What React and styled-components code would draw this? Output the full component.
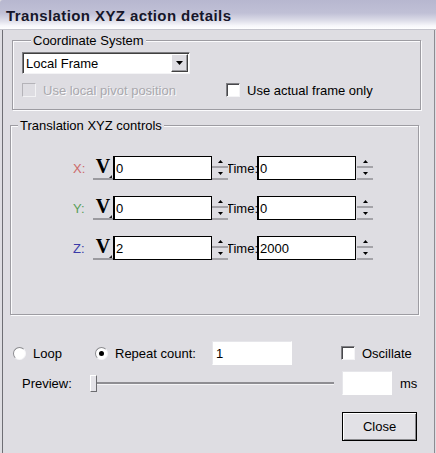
import styled, { createGlobalStyle } from "styled-components";

const GlobalStyle = createGlobalStyle`
  body {
    margin: 0;
    background: #dedde2;
    font-family: "Liberation Sans", Arial, sans-serif;
    font-size: 13px;
    color: #000;
  }
`;

const Window = styled.div`
  width: 436px;
  height: 453px;
  display: flex;
  flex-direction: column;
  background: #dedde2;
  overflow: hidden;
`;

const TitleBar = styled.div`
  height: 30px;
  flex-shrink: 0;
  display: flex;
  align-items: center;
  padding: 2px 0 0 6px;
  box-sizing: border-box;
  background: linear-gradient(
    to bottom,
    #b7b7cf 0%,
    #c0c0d6 45%,
    #dcdce8 70%,
    #f6f6fa 88%,
    #ffffff 100%
  );
  border-bottom: 1px solid #c4c4cc;
  border-top-left-radius: 3px;
  font-weight: bold;
  font-size: 15px;
  letter-spacing: 0.4px;
  color: #16162a;
`;

const Body = styled.div`
  flex: 1;
  margin: 0 1px 0 2px;
  padding-top: 3px;
  border-left: 1px solid #6e6e74;
  border-right: 1px solid #8c8c92;
`;

const Group = styled.fieldset`
  margin: ${(p) => p.$mt}px 0 0 ${(p) => p.$ml}px;
  width: ${(p) => p.$w}px;
  box-sizing: border-box;
  min-width: 0;
  padding: ${(p) => p.$pt}px 0 ${(p) => p.$pb}px ${(p) => p.$pl}px;
  border: 1px solid #9d9ca2;
  box-shadow: inset 1px 1px 0 #fbfbfd, 1px 1px 0 #fbfbfd;
`;

const Legend = styled.legend`
  margin-left: ${(p) => p.$offset}px;
  padding: 0 2px;
  line-height: 15px;
  background: #dedde2;
`;

const Select = styled.div`
  width: 168px;
  height: 22px;
  box-sizing: border-box;
  display: flex;
  align-items: center;
  background: #fff;
  border: 1px solid;
  border-color: #7c7c80 #f4f4f6 #f4f4f6 #7c7c80;
  box-shadow: inset 1px 1px 0 #404040;
  padding: 1px 1px 1px 3px;
`;

const SelectText = styled.span`
  flex: 1;
`;

const DropButton = styled.div`
  width: 17px;
  height: 18px;
  box-sizing: border-box;
  display: flex;
  align-items: center;
  justify-content: center;
  background: #dedde2;
  border: 1px solid;
  border-color: #fff #404040 #404040 #fff;
  box-shadow: inset -1px -1px 0 #9a9a9e;
`;

const CheckRow = styled.div`
  display: flex;
  align-items: center;
  height: 14px;
  margin-top: 9px;
`;

const CheckOption = styled.label`
  display: flex;
  align-items: center;
  width: ${(p) => (p.$w ? `${p.$w}px` : "auto")};
  margin-left: ${(p) => p.$ml || 0}px;
  color: ${(p) => (p.$disabled ? "#a9a8ad" : "#000")};
  text-shadow: ${(p) => (p.$disabled ? "1px 1px 0 #fbfbfd" : "none")};
  white-space: nowrap;
`;

const Box = styled.span`
  width: 14px;
  height: 14px;
  box-sizing: border-box;
  flex-shrink: 0;
  margin-right: 7px;
  background: ${(p) => (p.$disabled ? "#dedde2" : "#fff")};
  border: 1px solid;
  border-color: ${(p) =>
    p.$disabled
      ? "#b4b3b8 #f2f2f4 #f2f2f4 #b4b3b8"
      : "#808084 #f4f4f6 #f4f4f6 #808084"};
  box-shadow: ${(p) => (p.$disabled ? "none" : "inset 1px 1px 0 #48484c")};
`;

const AxisRow = styled.div`
  display: flex;
  align-items: center;
  height: 24px;
  padding-left: 62px;
  margin-bottom: ${(p) => (p.$last ? 0 : 16)}px;
`;

const AxisLabel = styled.span`
  width: 20px;
  color: ${(p) => p.$color};
`;

const VButton = styled.div`
  position: relative;
  width: 20px;
  height: 24px;
  box-sizing: border-box;
  display: flex;
  align-items: center;
  justify-content: center;
  padding-bottom: 2px;
  border-bottom: 2px solid #9b9a9f;
  font-family: "Liberation Serif", "Times New Roman", serif;
  font-weight: bold;
  font-size: 20px;

  &::after {
    content: "";
    position: absolute;
    right: 1px;
    bottom: 0;
    width: 0;
    height: 0;
    border-left: 3px solid transparent;
    border-bottom: 3px solid #202020;
  }
`;

const NumInput = styled.input`
  width: 99px;
  height: 24px;
  box-sizing: border-box;
  margin: 0;
  padding: 0 0 0 1px;
  border: 1px solid #000;
  border-left-width: 2px;
  background: #fff;
  font-family: inherit;
  font-size: 13px;
  color: #000;
  outline: none;
`;

const Spinner = styled.div`
  position: relative;
  z-index: 1;
  width: 16px;
  height: 24px;
  margin-left: ${(p) => p.$ml || 0}px;
  display: flex;
  flex-direction: column;
`;

const SpinHalf = styled.div`
  flex: 1;
  display: flex;
  align-items: center;
  justify-content: center;
  border-bottom: 2px solid #a4a3a8;
  background: #dedde2;
`;

const TimeLabel = styled.span`
  width: 31px;
  margin-left: -2px;
  white-space: nowrap;
`;

const OptionsRow = styled.div`
  display: flex;
  align-items: center;
  height: 24px;
  margin-top: 26px;
  padding-left: 10px;
`;

const RadioOption = styled.label`
  display: flex;
  align-items: center;
  width: ${(p) => p.$w}px;
  white-space: nowrap;
`;

const Radio = styled.span`
  width: 13px;
  height: 13px;
  box-sizing: border-box;
  flex-shrink: 0;
  margin-right: 7px;
  border-radius: 50%;
  border: 1px solid;
  border-color: #8a8a8e #f6f6f8 #f6f6f8 #8a8a8e;
  background: #fff;
  display: flex;
  align-items: center;
  justify-content: center;

  &::after {
    content: "";
    width: 5px;
    height: 5px;
    border-radius: 50%;
    background: ${(p) => (p.$checked ? "#000" : "transparent")};
  }
`;

const TextBox = styled.input`
  width: ${(p) => p.$w}px;
  height: 24px;
  box-sizing: border-box;
  margin: 0 0 0 ${(p) => p.$ml || 0}px;
  padding: 0 0 0 3px;
  border: 1px solid;
  border-color: #e6e6ea #fff #fff #e6e6ea;
  background: #fff;
  font-family: inherit;
  font-size: 13px;
  color: #000;
  outline: none;
`;

const PreviewRow = styled.div`
  display: flex;
  align-items: center;
  height: 24px;
  margin-top: 6px;
  padding-left: 19px;
`;

const PreviewLabel = styled.span`
  width: 68px;
`;

const Slider = styled.div`
  width: 244px;
  height: 24px;
  display: flex;
  align-items: center;
`;

const Thumb = styled.div`
  width: 7px;
  height: 17px;
  box-sizing: border-box;
  background: #e4e3e8;
  border: 1px solid;
  border-color: #fff #6c6c70 #6c6c70 #fff;
`;

const Track = styled.div`
  flex: 1;
  height: 2px;
  background: #8e8d92;
  border-bottom: 1px solid #f4f4f6;
`;

const Unit = styled.span`
  margin-left: 8px;
`;

const ButtonRow = styled.div`
  display: flex;
  justify-content: flex-end;
  margin-top: 17px;
  padding-right: 17px;
`;

const Button = styled.button`
  width: 75px;
  height: 29px;
  box-sizing: border-box;
  margin: 0;
  padding: 0;
  border: 1px solid #000;
  background: #e2e1e6;
  box-shadow: inset 1px 1px 0 #fff, inset -1px -1px 0 #8a8a8e;
  font-family: inherit;
  font-size: 13px;
  color: #000;
`;

const Arrow = ({ up }) => (
  <svg width="5" height="3" viewBox="0 0 5 3">
    <path d={up ? "M2.5 0 L5 3 L0 3 Z" : "M0 0 L5 0 L2.5 3 Z"} fill="#000" />
  </svg>
);

const Spin = ({ ml }) => (
  <Spinner $ml={ml}>
    <SpinHalf>
      <Arrow up />
    </SpinHalf>
    <SpinHalf>
      <Arrow />
    </SpinHalf>
  </Spinner>
);

const axes = [
  { axis: "X", color: "#cc6a6a", value: "0", time: "0" },
  { axis: "Y", color: "#5a9e5a", value: "0", time: "0" },
  { axis: "Z", color: "#3a3aa8", value: "2", time: "2000" },
];

const App = () => {
  return (
    <Window>
      <GlobalStyle />
      <TitleBar>Translation XYZ action details</TitleBar>
      <Body>
        <Group $mt={0} $ml={9} $w={409} $pt={4} $pb={12} $pl={9}>
          <Legend $offset={9}>Coordinate System</Legend>
          <Select>
            <SelectText>Local Frame</SelectText>
            <DropButton>
              <svg width="7" height="4" viewBox="0 0 7 4">
                <path d="M0 0 L7 0 L3.5 4 Z" fill="#000" />
              </svg>
            </DropButton>
          </Select>
          <CheckRow>
            <CheckOption $w={204} $disabled>
              <Box $disabled />
              Use local pivot position
            </CheckOption>
            <CheckOption>
              <Box />
              Use actual frame only
            </CheckOption>
          </CheckRow>
        </Group>

        <Group $mt={8} $ml={7} $w={409} $pt={23} $pb={54} $pl={0}>
          <Legend $offset={7}>Translation XYZ controls</Legend>
          {axes.map((a, i) => (
            <AxisRow key={a.axis} $last={i === axes.length - 1}>
              <AxisLabel $color={a.color}>{a.axis}:</AxisLabel>
              <VButton>V</VButton>
              <NumInput defaultValue={a.value} readOnly />
              <Spin />
              <TimeLabel>Time:</TimeLabel>
              <NumInput defaultValue={a.time} readOnly />
              <Spin ml={1} />
            </AxisRow>
          ))}
        </Group>

        <OptionsRow>
          <RadioOption $w={82}>
            <Radio />
            Loop
          </RadioOption>
          <RadioOption $w={117}>
            <Radio $checked />
            Repeat count:
          </RadioOption>
          <TextBox $w={80} defaultValue="1" readOnly />
          <CheckOption $ml={49}>
            <Box />
            Oscillate
          </CheckOption>
        </OptionsRow>

        <PreviewRow>
          <PreviewLabel>Preview:</PreviewLabel>
          <Slider>
            <Thumb />
            <Track />
          </Slider>
          <TextBox $w={50} $ml={8} readOnly />
          <Unit>ms</Unit>
        </PreviewRow>

        <ButtonRow>
          <Button>Close</Button>
        </ButtonRow>
      </Body>
    </Window>
  );
};

export default App;
